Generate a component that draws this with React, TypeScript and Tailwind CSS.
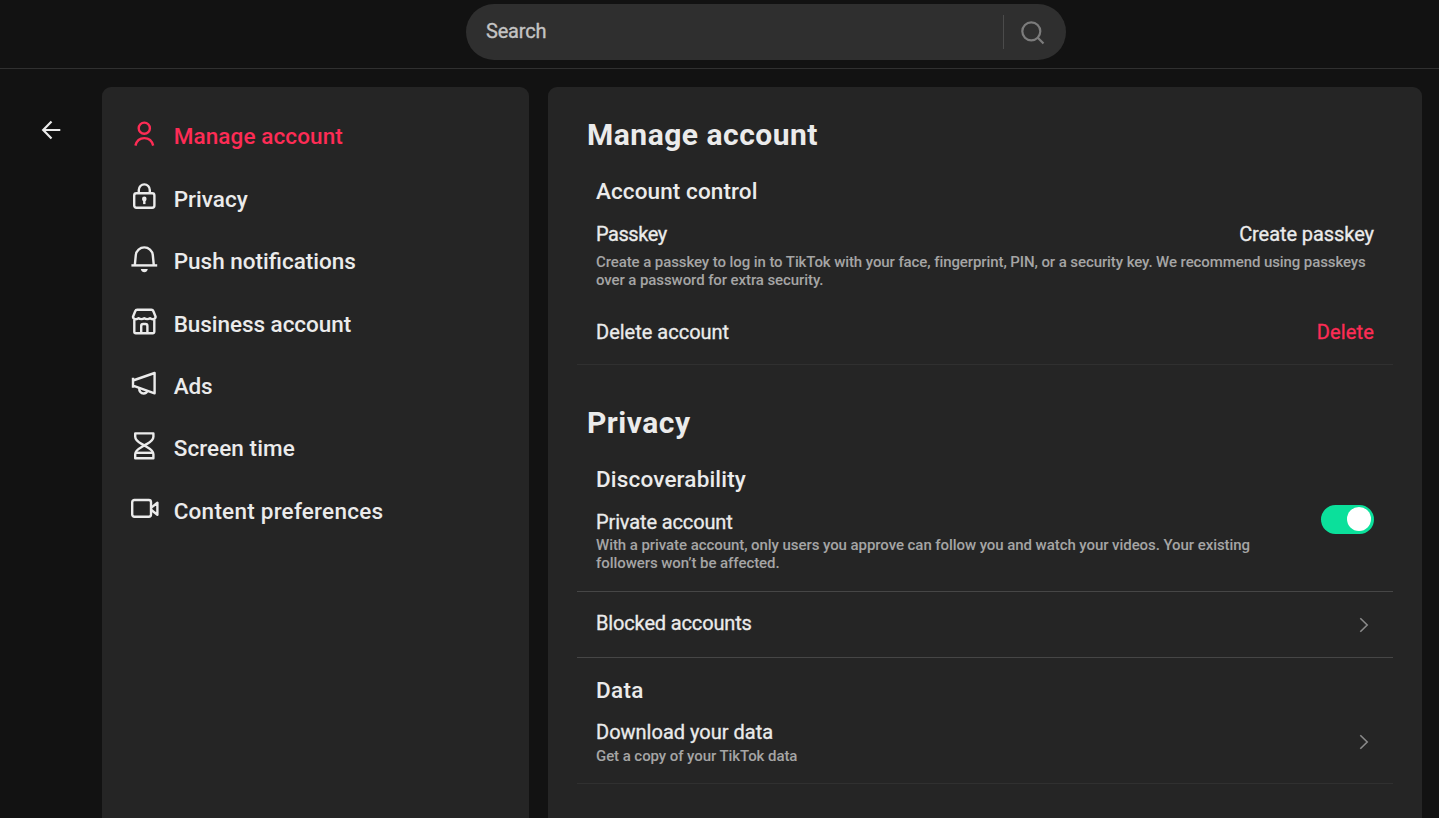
import type { ReactNode } from "react";

const navItems: { label: string; tracking: string; icon: ReactNode }[] = [
  {
    label: "Manage account",
    tracking: "tracking-[0.1px]",
    icon: (
      <>
        <circle cx="14.3" cy="9.2" r="5.600" />
        <path d="M5.400 26.600C6.600 21.700 10 19.100 14.300 19.100S22 21.700 23.200 26.600" />
      </>
    ),
  },
  {
    label: "Privacy",
    tracking: "tracking-[0.02px]",
    icon: (
      <>
        <rect x="4.200" y="11.200" width="20.200" height="14.600" rx="2.200" />
        <path d="M8.800 11.200V7.900a5.500 5.500 0 0 1 11 0v3.300" />
        <circle cx="14.300" cy="16.900" r="1.500" fill="currentColor" strokeWidth="1.600" />
        <path d="M14.300 17.500v4.600" />
      </>
    ),
  },
  {
    label: "Push notifications",
    tracking: "tracking-[0px]",
    icon: (
      <>
        <path d="M1.400 21.400H27.200" />
        <path d="M4.800 21.400L5.800 11A8.550 8.550 0 0 1 22.800 11L23.800 21.400" />
        <path d="M10.800 25h7c-.5 2.200-1.800 3.200-3.500 3.200s-3-1-3.500-3.200z" fill="currentColor" stroke="none" />
      </>
    ),
  },
  {
    label: "Business account",
    tracking: "tracking-[-0.05px]",
    icon: (
      <>
        <path d="M4.300 12.500V24.800a1.500 1.500 0 0 0 1.500 1.500h17a1.500 1.500 0 0 0 1.500-1.500V12.500" />
        <path d="M5.200 4.300Q5.700 2.800 7.200 2.800H21.400Q22.900 2.800 23.400 4.300L25.600 9.800C25.600 12.600 21.700 12.700 20 11.200C18.600 12.300 15.800 12.300 14.300 11.200C12.800 12.300 10 12.300 8.600 11.200C6.900 12.700 3 12.600 3 9.800Z" />
        <path d="M11.200 26V18.900a1.900 1.900 0 0 1 1.900-1.900h2.400a1.900 1.900 0 0 1 1.900 1.900V26" />
      </>
    ),
  },
  {
    label: "Ads",
    tracking: "tracking-[-0.1px]",
    icon: (
      <>
        <path d="M3 8.800V18.800M3 11.500L24.600 4V24.300L3 16.600" />
        <path d="M9.200 18.700C9 22.400 11 24.500 13.600 24.500C15.800 24.500 17 23.400 17.600 21.700" />
      </>
    ),
  },
  {
    label: "Screen time",
    tracking: "tracking-[0.08px]",
    icon: (
      <>
        <path d="M5.200 2.400H23.400V5.800C23.400 10.400 18 12.200 14.300 14.500C10.600 12.200 5.200 10.400 5.200 5.800Z" />
        <path d="M14.300 14.500C18 16.800 23.400 18.800 23.400 23.200V27.200H5.200V23.200C5.200 18.800 10.600 16.800 14.300 14.500Z" />
        <path d="M6 21.800H22.600" />
      </>
    ),
  },
  {
    label: "Content preferences",
    tracking: "tracking-[0.24px]",
    icon: (
      <>
        <rect x="2.200" y="6" width="18.800" height="16.800" rx="2.200" />
        <path d="M21 13.900L27.400 8.800V20.800L21 15.700" />
      </>
    ),
  },
];

function Chevron() {
  return (
    <svg className="h-[16px] w-[10px] text-[#8a8a8a]" viewBox="0 0 10 16" fill="none" stroke="currentColor" strokeWidth="1.6">
      <path d="M1.300 1.200L8.200 8L1.300 14.800" />
    </svg>
  );
}

export default function App() {
  return (
    <div className="flex h-[818px] w-full flex-col overflow-hidden bg-[#121212] font-[Roboto,sans-serif] text-[#ebebeb]">
      <header className="flex h-[69px] shrink-0 border-b border-[#303030] pt-1 pl-[466px]">
        <div className="flex h-14 w-[600px] items-center rounded-full bg-[#2f2f2f] pl-5">
          <span className="grow pb-0.5 text-[20px] leading-6 tracking-[-0.2px] text-[#c4c4c4] [-webkit-text-stroke:0.35px]">Search</span>
          <span className="h-[34px] w-px bg-[#4b4b4b]" />
          <svg className="mr-[20px] ml-[16px] h-[26px] w-[26px] text-[#7c7c7c]" viewBox="0 0 26 26" fill="none" stroke="currentColor" strokeWidth="2.200">
            <circle cx="11.300" cy="12.300" r="9" />
            <path d="M17.600 18.400L23.500 24.400" />
          </svg>
        </div>
      </header>
      <div className="flex min-h-0 grow pt-[18px]">
        <button className="mt-[33px] ml-[41px] h-5 w-5 shrink-0" aria-label="Back">
          <svg className="h-5 w-5" viewBox="0 0 20 20" fill="none" stroke="currentColor" strokeWidth="2.200">
            <path d="M10.500 1.600L2.200 10L10.500 18.400M2 10H19.300" />
          </svg>
        </button>
        <nav className="ml-[41px] flex w-[427px] shrink-0 flex-col rounded-t-[9px] bg-[#252525] pt-[18.1px] pl-[28px]">
          {navItems.map((item, i) => (
            <a key={item.label} className={i === 0 ? "flex h-[62.43px] items-center text-[#fe2c55]" : "flex h-[62.43px] items-center"}>
              <svg className="mb-[5px] h-[29px] w-[29px] shrink-0" viewBox="0 0 29 29" fill="none" stroke="currentColor" strokeWidth="2.400" strokeLinejoin="round">
                {item.icon}
              </svg>
              <span className={`ml-[14.700px] text-[22.500px] leading-7 font-medium ${item.tracking}`}>{item.label}</span>
            </a>
          ))}
        </nav>
        <main className="ml-[19px] w-[874px] shrink-0 rounded-t-[9px] bg-[#252525] pr-[29px] pl-[29px]">
          <section className="h-[278px] border-b border-[#303030] pr-[19px] pl-[19px]">
            <h1 className="-ml-[9px] pt-[30px] text-[30px] leading-9 font-bold tracking-[0.5px]">Manage account</h1>
            <h2 className="pt-[24px] text-[22.500px] leading-7 font-medium tracking-[0.1px]">Account control</h2>
            <div className="mt-[17px] flex justify-between text-[20px] leading-6 [-webkit-text-stroke:0.3px]">
              <span className="tracking-[-0.45px]">Passkey</span>
              <span className="tracking-[-0.07px]">Create passkey</span>
            </div>
            <p className="mt-[7px] text-[15px] leading-[18px] font-medium tracking-[-0.09px] whitespace-nowrap text-[#a5a5a5]">
              Create a passkey to log in to TikTok with your face, fingerprint, PIN, or a security key. We recommend using passkeys
              <br />
              over a password for extra security.
            </p>
            <div className="mt-[31px] flex justify-between text-[20px] leading-6 [-webkit-text-stroke:0.3px]">
              <span className="tracking-[0px]">Delete account</span>
              <span className="tracking-[0.15px] text-[#fe2c55]">Delete</span>
            </div>
          </section>
          <section className="h-[227px] border-b border-[#464646] pr-[19px] pl-[19px]">
            <h1 className="-ml-[9px] pt-[40px] text-[30px] leading-9 font-bold tracking-[0.5px]">Privacy</h1>
            <h2 className="pt-[24px] text-[22.500px] leading-7 font-medium tracking-[0.170px]">Discoverability</h2>
            <div className="mt-[12px] flex justify-between">
              <div className="pt-[5px]">
                <div className="text-[20px] leading-6 tracking-[-0.13px] [-webkit-text-stroke:0.3px]">Private account</div>
                <p className="mt-[2px] text-[15px] leading-[18px] font-medium tracking-[-0.065px] whitespace-nowrap text-[#a5a5a5]">
                  With a private account, only users you approve can follow you and watch your videos. Your existing
                  <br />
                  followers won’t be affected.
                </p>
              </div>
              <span className="flex h-[29px] w-[53px] justify-end rounded-full bg-[#0be09b] pt-[2px] pr-[3px]">
                <span className="h-6 w-6 rounded-full bg-white" />
              </span>
            </div>
          </section>
          <section className="flex h-[66px] items-center justify-between border-b border-[#464646] pr-[24px] pl-[19px]">
            <span className="pb-[4px] text-[20px] leading-6 tracking-[-0.150px] [-webkit-text-stroke:0.3px]">Blocked accounts</span>
            <Chevron />
          </section>
          <section className="h-[126px] border-b border-[#303030] pr-[24px] pl-[19px]">
            <h2 className="pt-[18px] text-[22.500px] leading-7 font-medium tracking-[0.3px]">Data</h2>
            <div className="mt-[16px] flex items-center justify-between">
              <div>
                <div className="text-[20px] leading-6 tracking-[0px] [-webkit-text-stroke:0.3px]">Download your data</div>
                <p className="mt-[3px] text-[15px] leading-[18px] font-medium tracking-[-0.07px] text-[#a5a5a5]">Get a copy of your TikTok data</p>
              </div>
              <span className="flex pb-[2px]">
                <Chevron />
              </span>
            </div>
          </section>
        </main>
      </div>
    </div>
  );
}
